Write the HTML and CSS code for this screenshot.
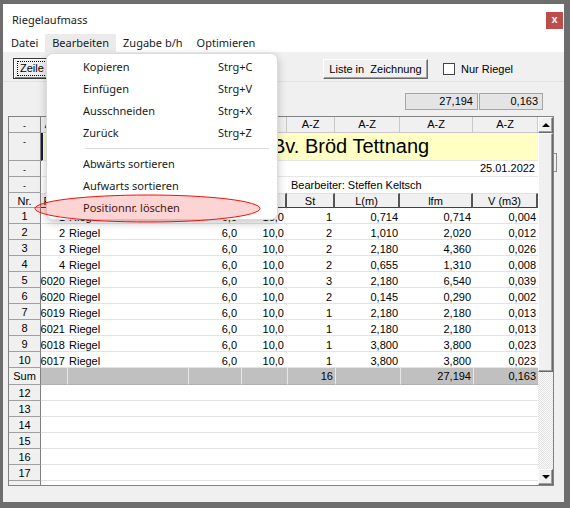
FILE: index.html
```html
<!DOCTYPE html>
<html lang="de">
<head>
    <meta charset="UTF-8">
    <title>Riegelaufmass</title>
    <link rel="stylesheet" href="styles.css">
</head>
<body>
    <div class="window">
        <div class="titlebar">
            <span>Riegelaufmass</span>
            <span class="close">x</span>
        </div>
        <div class="menubar">
            <span class="menu-item">Datei</span>
            <span class="menu-item active">Bearbeiten</span>
            <span class="menu-item">Zugabe b/h</span>
            <span class="menu-item">Optimieren</span>
        </div>
        <div class="toolbar">
            <button class="btn default"><span class="focus">Zeile einfügen</span></button>
            <button class="btn liste">Liste in  Zeichnung</button>
            <label class="check"><span class="box"></span>Nur Riegel</label>
        </div>
        <div class="totals">
            <span class="total wide">27,194</span>
            <span class="total">0,163</span>
        </div>
        <div class="grid">
            <div class="table" id="table">
                <div class="rh dash">-</div>
                <div class="az">A-Z</div>
                <div class="az">A-Z</div>
                <div class="az">A-Z</div>
                <div class="az">A-Z</div>
                <div class="az">A-Z</div>
                <div class="az">A-Z</div>
                <div class="az">A-Z</div>
                <div class="az">A-Z</div>

                <div class="rh dash">-</div>
                <div class="title-cell">Bv. Bröd Tettnang</div>

                <div class="rh dash">-</div>
                <div class="date-cell">25.01.2022</div>

                <div class="rh dash">-</div>
                <div class="blank"></div>
                <div class="bearb">Bearbeiter: Steffen Keltsch</div>

                <div class="rh">Nr.</div>
                <div class="hd">Pos</div>
                <div class="hd">Bezeichnung</div>
                <div class="hd">b</div>
                <div class="hd">h</div>
                <div class="hd">St</div>
                <div class="hd">L(m)</div>
                <div class="hd">lfm</div>
                <div class="hd">V (m3)</div>
            </div>
            <div class="scrollbar">
                <div class="sb-btn up"></div>
                <div class="thumb"></div>
                <div class="track"></div>
                <div class="sb-btn down"></div>
            </div>
        </div>

        <div class="splitter"></div>

        <div class="dropdown">
            <div class="dd-item"><span>Kopieren</span><span>Strg+C</span></div>
            <div class="dd-item"><span>Einfügen</span><span>Strg+V</span></div>
            <div class="dd-item"><span>Ausschneiden</span><span>Strg+X</span></div>
            <div class="dd-item"><span>Zurück</span><span>Strg+Z</span></div>
            <div class="dd-sep"></div>
            <div class="dd-item"><span>Abwärts sortieren</span></div>
            <div class="dd-item"><span>Aufwarts sortieren</span></div>
            <div class="dd-item"><span>Positionnr. löschen</span></div>
        </div>

        <svg class="mark" width="227" height="30" viewBox="0 0 227 30">
            <ellipse cx="113.5" cy="14.5" rx="112.5" ry="13.5" fill="rgba(240,0,0,0.17)" stroke="#f01010" stroke-width="1"/>
        </svg>
    </div>

    <script>
        const rows = [
            ['1', 'Riegel', '6,0', '10,0', '1', '0,714', '0,714', '0,004'],
            ['2', 'Riegel', '6,0', '10,0', '2', '1,010', '2,020', '0,012'],
            ['3', 'Riegel', '6,0', '10,0', '2', '2,180', '4,360', '0,026'],
            ['4', 'Riegel', '6,0', '10,0', '2', '0,655', '1,310', '0,008'],
            ['6020', 'Riegel', '6,0', '10,0', '3', '2,180', '6,540', '0,039'],
            ['6020', 'Riegel', '6,0', '10,0', '2', '0,145', '0,290', '0,002'],
            ['6019', 'Riegel', '6,0', '10,0', '1', '2,180', '2,180', '0,013'],
            ['6021', 'Riegel', '6,0', '10,0', '1', '2,180', '2,180', '0,013'],
            ['6018', 'Riegel', '6,0', '10,0', '1', '3,800', '3,800', '0,023'],
            ['6017', 'Riegel', '6,0', '10,0', '1', '3,800', '3,800', '0,023']
        ];

        let html = rows.map((r, i) => `
            <div class="rh">${i + 1}</div>
            <div class="c pos"><span>${r[0]}</span></div>
            <div class="c txt">${r[1]}</div>
            <div class="c p4">${r[2]}</div>
            <div class="c">${r[3]}</div>
            <div class="c">${r[4]}</div>
            <div class="c p2">${r[5]}</div>
            <div class="c p2">${r[6]}</div>
            <div class="c p2">${r[7]}</div>
        `).join('');

        html += `
            <div class="rh">Sum</div>
            <div class="s first"></div>
            <div class="s"></div>
            <div class="s"></div>
            <div class="s"></div>
            <div class="s">16</div>
            <div class="s"></div>
            <div class="s">27,194</div>
            <div class="s">0,163</div>
        `;

        for (let n = 12; n <= 17; n++) {
            html += `<div class="rh">${n}</div><div class="empty"></div>`;
        }
        // the next row is only partly visible, no number shows
        html += `<div class="rh"></div><div class="empty"></div>`;

        document.getElementById('table').insertAdjacentHTML('beforeend', html);
    </script>
</body>
</html>
```

FILE: styles.css
```css
* {
    box-sizing: border-box;
}
body {
    margin: 0;
    width: 570px;
    height: 508px;
    overflow: hidden;
    background-color: #6d6d6d;
    font-family: "Liberation Sans", Arial, sans-serif;
    font-size: 11px;
    color: #000;
}
.window {
    position: relative;
    margin: 4px 0 0 3px;
    width: 561px;
    height: 498px;
    background-color: #f0f0f0;
    display: flex;
    flex-direction: column;
}
.titlebar {
    height: 30px;
    background-color: #fff;
    display: flex;
    align-items: center;
    padding-left: 9px;
    font-family: "Noto Sans", sans-serif;
    font-size: 11px;
    color: #1a1a1a;
}
.close {
    margin-left: auto;
    margin-right: 1px;
    align-self: flex-start;
    margin-top: 8px;
    width: 17px;
    height: 17px;
    background-color: #bd4d4a;
    color: #fff;
    font: bold 11px/15px "Liberation Sans", sans-serif;
    text-align: center;
}
.menubar {
    height: 18px;
    background-color: #fff;
    display: flex;
    padding-left: 1px;
    font-family: "Noto Sans", sans-serif;
    font-size: 11px;
    line-height: 18px;
    color: #1a1a1a;
}
.menu-item {
    padding: 0 7px;
}
.menu-item.active {
    background-color: #ebebeb;
}
.toolbar {
    height: 29px;
    display: flex;
    align-items: flex-start;
    padding: 0 15px 0 10px;
}
.btn {
    font: 11px "Liberation Sans", Arial, sans-serif;
    color: #000;
    background-color: #f0f0f0;
    border: 1px solid;
    border-color: #fff #696969 #696969 #fff;
    box-shadow: inset -1px -1px #a0a0a0;
    padding: 0;
}
.btn.default {
    width: 90px;
    height: 21px;
    margin-top: 6px;
    padding: 2px 3px;
    border: 1px solid #3a3a3a;
    box-shadow: inset 1px 1px #fff, inset -1px -1px #808080;
    text-align: left;
}
.focus {
    display: block;
    height: 100%;
    border: 1px dotted #000;
    padding-left: 2px;
    line-height: 13px;
    white-space: nowrap;
    overflow: hidden;
}
.btn.liste {
    margin-left: auto;
    margin-top: 7px;
    width: 105px;
    height: 20px;
    white-space: pre;
}
.check {
    display: flex;
    align-items: center;
    margin-left: 15px;
    margin-top: 11px;
    width: 106px;
    line-height: 12px;
}
.box {
    width: 12px;
    height: 12px;
    margin-right: 6px;
    background-color: #fff;
    border: 1px solid #444;
}
.totals {
    height: 35px;
    display: flex;
    justify-content: flex-end;
    gap: 1px;
    padding: 11px 21px 0 0;
    border-top: 1px solid #e2e2e2;
}
.total {
    width: 64px;
    height: 17px;
    background-color: #e4e4e4;
    border: 1px solid #a5a5a5;
    text-align: right;
    padding-right: 4px;
    line-height: 15px;
}
.total.wide {
    width: 73px;
}
.grid {
    margin-left: 5px;
    width: 546px;
    height: 370px;
    border: 1px solid #828282;
    background-color: #fff;
    display: flex;
}
.table {
    width: 529px;
    display: grid;
    grid-template-columns: 32px 26px 121px 53px 46px 48px 65px 73px 65px;
    grid-template-rows: 16px 28px 16px 16px 15px repeat(10, 16px) 17px;
    grid-auto-rows: 16px;
    align-content: start;
    overflow: hidden;
}
.rh {
    background-color: #f0f0f0;
    border-right: 1px solid #808080;
    border-bottom: 1px solid #a0a0a0;
    text-align: center;
    padding-top: 1px;
    line-height: 15px;
}
.rh.dash {
    font-size: 9px;
    line-height: 16px;
}
.az {
    background-color: #f0f0f0;
    border-right: 1px solid #c8c8c8;
    border-bottom: 1px solid #c8c8c8;
    text-align: center;
    line-height: 15px;
}
.title-cell {
    grid-column: 2 / 10;
    background-color: #ffffc4;
    border-left: 2px solid #1a1a40;
    border-bottom: 1px solid #e6e6e6;
    padding-left: 229px;
    font-size: 20px;
    line-height: 27px;
    white-space: nowrap;
    overflow: hidden;
}
.date-cell {
    grid-column: 2 / 10;
    border-bottom: 1px solid #e6e6e6;
    text-align: right;
    padding-right: 3px;
    line-height: 15px;
}
.blank {
    grid-column: 2 / 6;
}
.bearb {
    grid-column: 6 / 10;
    padding-left: 4px;
    line-height: 17px;
    white-space: nowrap;
}
.hd {
    background-color: #f0f0f0;
    border-top: 1px solid #e0e0e0;
    border-right: 2px solid #555;
    border-bottom: 1px solid #404040;
    text-align: center;
    line-height: 14px;
    white-space: nowrap;
    overflow: hidden;
}
.c {
    border-bottom: 1px solid #e3e3e3;
    padding-top: 2px;
    padding-right: 3px;
    text-align: right;
    line-height: 14px;
    white-space: nowrap;
    overflow: hidden;
}
.c.pos {
    display: flex;
    justify-content: flex-end;
    padding-right: 2px;
}
.c.txt {
    text-align: left;
    padding-left: 2px;
}
.c.p4 {
    padding-right: 4px;
}
.c.p2 {
    padding-right: 2px;
}
.s {
    background-color: #c0c0c0;
    border-left: 1px solid #e8e8e8;
    border-bottom: 1px solid #b0b0b0;
    text-align: right;
    padding-top: 1px;
    padding-right: 2px;
    line-height: 15px;
}
.s.first {
    border-left: none;
}
.empty {
    grid-column: 2 / 10;
    border-bottom: 1px solid #e3e3e3;
}
.scrollbar {
    width: 15px;
    display: flex;
    flex-direction: column;
}
.sb-btn {
    height: 16px;
    background-color: #f0f0f0;
    border: 1px solid;
    border-color: #fff #696969 #696969 #fff;
    box-shadow: inset -1px -1px #a0a0a0;
    display: flex;
    align-items: center;
    justify-content: center;
}
.up::before,
.down::before {
    content: "";
    border-left: 4px solid transparent;
    border-right: 4px solid transparent;
}
.up::before {
    border-bottom: 4px solid #000;
}
.down::before {
    border-top: 4px solid #000;
}
.thumb {
    height: 239px;
    background-color: #f0f0f0;
    border: 1px solid;
    border-color: #fff #696969 #696969 #fff;
    box-shadow: inset -1px -1px #a0a0a0;
}
.track {
    flex: 1;
    background: repeating-conic-gradient(#fafafa 0 25%, #e2e2e2 0 50%) 0 0 / 2px 2px;
}
.splitter {
    position: absolute;
    left: 550px;
    top: 149px;
    width: 4px;
    height: 19px;
    background-color: #f0f0f0;
    border: 1px solid #8a8a8a;
}
.dropdown {
    position: absolute;
    left: 43px;
    top: 49px;
    width: 232px;
    height: 167px;
    padding: 2px 0;
    background-color: #fff;
    border: 1px solid #dcdcdc;
    border-radius: 7px;
    box-shadow: 0 3px 10px rgba(0,0,0,0.22);
    font-family: "Noto Sans", sans-serif;
    font-size: 11px;
    color: #1a1a1a;
}
.dd-item {
    display: grid;
    grid-template-columns: 135px auto;
    height: 22px;
    line-height: 22px;
    padding-left: 36px;
}
.dd-sep {
    height: 1px;
    margin: 4px 8px 4px 38px;
    background-color: #d9d9d9;
}
.mark {
    position: absolute;
    left: 31px;
    top: 190px;
}
```
